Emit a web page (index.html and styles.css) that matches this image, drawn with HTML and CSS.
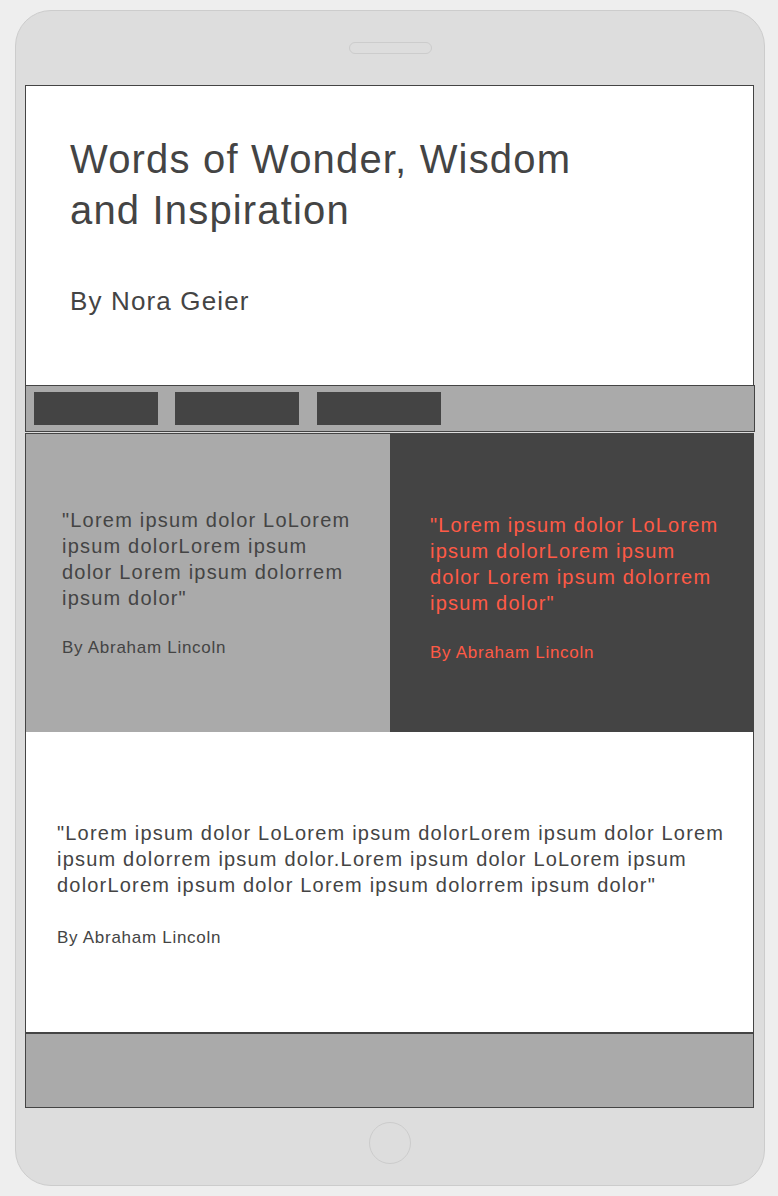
FILE: index.html
```html
<!DOCTYPE html>
<html>
<head>
<meta charset="utf-8">
<link rel="stylesheet" href="styles.css">
</head>
<body>
<div class="device">
  <div class="speaker"></div>
  <div class="screen">
    <header class="hero">
      <h1 class="title">Words of Wonder, Wisdom and Inspiration</h1>
      <p class="author">By Nora Geier</p>
    </header>
    <nav class="nav">
      <span class="nav-btn"></span>
      <span class="nav-btn"></span>
      <span class="nav-btn"></span>
    </nav>
    <div class="divider"></div>
    <section class="quote-row">
      <div class="quote-card light">
        <p class="quote">"Lorem ipsum dolor LoLorem ipsum dolorLorem ipsum dolor Lorem ipsum dolorrem ipsum dolor"</p>
        <p class="by">By Abraham Lincoln</p>
      </div>
      <div class="quote-card dark">
        <p class="quote">"Lorem ipsum dolor LoLorem ipsum dolorLorem ipsum dolor Lorem ipsum dolorrem ipsum dolor"</p>
        <p class="by">By Abraham Lincoln</p>
      </div>
    </section>
    <section class="wide-quote">
      <div class="wide-inner">
        <p class="quote">"Lorem ipsum dolor LoLorem ipsum dolorLorem ipsum dolor Lorem ipsum dolorrem ipsum dolor.Lorem ipsum dolor LoLorem ipsum dolorLorem ipsum dolor Lorem ipsum dolorrem ipsum dolor"</p>
        <p class="by">By Abraham Lincoln</p>
      </div>
    </section>
    <footer class="footer"></footer>
  </div>
  <div class="home"></div>
</div>
</body>
</html>
```

FILE: styles.css
```css
* { box-sizing: border-box; }
html, body {
  margin: 0;
  padding: 0;
  background: #eeeeee;
  font-family: "Liberation Sans", Arial, sans-serif;
  color: #444444;
}
.device {
  margin: 10px 0 0 15px;
  width: 750px;
  height: 1176px;
  background: #dddddd;
  border: 1px solid #cccccc;
  border-radius: 36px;
  display: flex;
  flex-direction: column;
  align-items: center;
}
.speaker {
  margin-top: 31px;
  width: 83px;
  height: 12px;
  border: 1px solid #cccccc;
  border-radius: 6px;
}
.screen {
  margin-top: 31px;
  align-self: flex-start;
  margin-left: 9px;
  width: 729px;
  display: flex;
  flex-direction: column;
}
.hero {
  height: 300px;
  background: #ffffff;
  border: 1px solid #444444;
  border-bottom: none;
  padding: 48px 0 0 44px;
}
.title {
  margin: 0;
  max-width: 540px;
  font-size: 40px;
  line-height: 51px;
  font-weight: normal;
  letter-spacing: 1.17px;
  color: #444444;
}
.author {
  margin: 49px 0 0;
  font-size: 26px;
  line-height: 32px;
  letter-spacing: 1.15px;
  color: #444444;
}
.nav {
  height: 47px;
  width: 730px;
  background: #aaaaaa;
  border: 1px solid #444444;
  display: flex;
  align-items: flex-start;
  padding: 6px 0 0 8px;
  gap: 17px;
}
.nav-btn {
  width: 124px;
  height: 33px;
  background: #444444;
}
.nav-btn:nth-child(3) { margin-left: 1px; }
.divider {
  height: 1px;
  background: #dddddd;
}
.quote-row {
  height: 299px;
  display: flex;
  border: 1px solid #444444;
  border-right: none;
  border-bottom: none;
}
.quote-card {
  flex: 0 0 364px;
  display: flex;
  flex-direction: column;
  justify-content: center;
}
.quote-card.light {
  background: #aaaaaa;
  padding: 0 33px 0 36px;
  color: #444444;
}
.quote-card.dark {
  flex: 1;
  background: #444444;
  padding: 10px 28px 0 40px;
  color: #ff5a46;
}
.quote {
  margin: 0;
  font-size: 20px;
  line-height: 26px;
  letter-spacing: 1.2px;
}
.by {
  margin: 26px 0 0;
  font-size: 17px;
  line-height: 22px;
  letter-spacing: 0.72px;
}
.wide-quote {
  height: 300px;
  background: #ffffff;
  border-left: 1px solid #444444;
  border-right: 1px solid #444444;
  display: flex;
  flex-direction: column;
  justify-content: center;
  padding: 4px 10px 0 31px;
  color: #444444;
}
.wide-quote .by { margin-top: 29px; }
.wide-inner { max-width: 680px; }
.footer {
  height: 76px;
  background: #aaaaaa;
  border: 1px solid #444444;
  border-top: 2px solid #444444;
}
.home {
  margin-top: 14px;
  width: 42px;
  height: 42px;
  border: 1px solid #cccccc;
  border-radius: 50%;
}
```
